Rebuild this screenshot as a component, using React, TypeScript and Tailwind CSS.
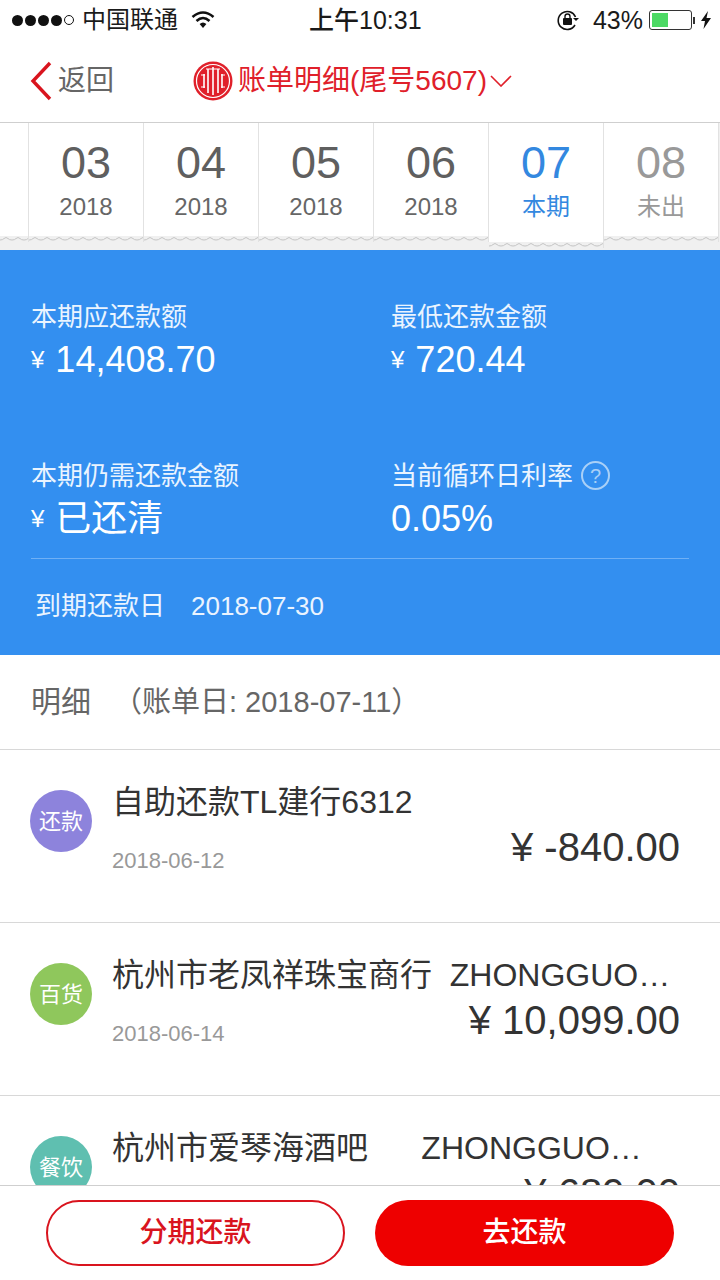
const font = '[font-family:"Liberation_Sans","Noto_Sans_CJK_SC",sans-serif]';

const months = [
  { m: '03', sub: '2018', color: 'text-[#5f5f5f]', subColor: 'text-[#666666]' },
  { m: '04', sub: '2018', color: 'text-[#5f5f5f]', subColor: 'text-[#666666]' },
  { m: '05', sub: '2018', color: 'text-[#5f5f5f]', subColor: 'text-[#666666]' },
  { m: '06', sub: '2018', color: 'text-[#5f5f5f]', subColor: 'text-[#666666]' },
  { m: '07', sub: '本期', color: 'text-[#3388e0]', subColor: 'text-[#3388e0]', active: true },
  { m: '08', sub: '未出', color: 'text-[#999999]', subColor: 'text-[#999999]' },
];

const rows = [
  { tag: '还款', tagBg: 'bg-[#8d83dc]', title: '自助还款TL建行6312', date: '2018-06-12', amount: '-840.00' },
  { tag: '百货', tagBg: 'bg-[#8fc75c]', title: '杭州市老凤祥珠宝商行  ZHONGGUO…', date: '2018-06-14', amount: '10,099.00' },
  { tag: '餐饮', tagBg: 'bg-[#5fbfb0]', title: '杭州市爱琴海酒吧      ZHONGGUO…', date: '2018-06-14', amount: '689.00' },
];

const Wave = ({ id }: { id: string }) => (
  <svg width="100%" height="6" className="block">
    <defs>
      <pattern id={id} width="12" height="6" patternUnits="userSpaceOnUse">
        <path d="M0 4 Q3 4 4 2.5 Q6 0.5 8 2.5 Q9 4 12 4" fill="none" stroke="#c4c4c4" strokeWidth="1" />
      </pattern>
    </defs>
    <rect width="100%" height="6" fill={`url(#${id})`} />
  </svg>
);

const Logo = () => (
  <svg width="40" height="40" viewBox="0 0 40 40">
    <circle cx="20" cy="20" r="19.5" fill="#e0202a" />
    <circle cx="20" cy="20" r="16.5" fill="none" stroke="#fff" strokeWidth="1.2" />
    <path d="M20 6v28M15 8v24M25 8v24M11 13v14M29 13v14" stroke="#fff" strokeWidth="1.6" fill="none" />
    <path d="M8 14h4M8 26h4M28 14h4M28 26h4M13 8h14" stroke="#fff" strokeWidth="1.2" fill="none" />
  </svg>
);

const StatusBar = () => (
  <div className="h-[40px] flex items-center justify-between pl-[12px] pr-[8px] text-[#1a1a1a] shrink-0">
    <div className="flex items-center w-[280px]">
      <div className="flex items-center gap-[2px]">
        <span className="size-[11px] rounded-full bg-[#111111]" />
        <span className="size-[11px] rounded-full bg-[#111111]" />
        <span className="size-[11px] rounded-full bg-[#111111]" />
        <span className="size-[11px] rounded-full bg-[#111111]" />
        <span className="size-[10px] rounded-full border border-[#111111]" />
      </div>
      <span className="ml-[8px] text-[24px] leading-none">中国联通</span>
      <svg width="24" height="18" viewBox="0 0 24 18" className="ml-[13px]">
        <path d="M1.5 6 Q12 -3 22.5 6 M5.5 10 Q12 4 18.5 10" fill="none" stroke="#111" strokeWidth="2.6" />
        <path d="M8.6 13 Q12 10 15.4 13 L12 17 Z" fill="#111" />
      </svg>
    </div>
    <div className="text-[25px] leading-none font-medium absolute left-[309px]">上午10:31</div>
    <div className="flex items-center">
      <svg width="24" height="24" viewBox="0 0 24 24">
        <path d="M19 17 A9 9 0 1 1 19.5 9" fill="none" stroke="#111" strokeWidth="1.6" />
        <path d="M17 10h6l-3 3z" fill="#111" />
        <rect x="7" y="10" width="9" height="7" rx="1" fill="#111" />
        <path d="M9 10V8.5a2.5 2.5 0 0 1 5 0V10" fill="none" stroke="#111" strokeWidth="1.4" />
      </svg>
      <span className="ml-[13px] text-[25px] leading-none">43%</span>
      <div className="ml-[6px] w-[43px] h-[20px] border border-[#333333] rounded-[3px] p-[2px]">
        <div className="w-[44%] h-full bg-[#4cd964]" />
      </div>
      <span className="w-[2px] h-[7px] bg-[#333333] ml-[1px]" />
      <svg width="12" height="18" viewBox="0 0 12 18" className="ml-[5px]">
        <path d="M8 0 L1 10 H5 L3.5 18 L11 7 H6.5 Z" fill="#111" />
      </svg>
    </div>
  </div>
);

const NavBar = () => (
  <div className="h-[82px] flex items-center shrink-0 relative">
    <svg width="24" height="40" viewBox="0 0 24 40" className="ml-[29px]">
      <path d="M21 2 L4 20 L21 38" fill="none" stroke="#d9141e" strokeWidth="3.4" />
    </svg>
    <span className="ml-[5px] text-[28px] text-[#666666] leading-none">返回</span>
    <div className="ml-[79px]"><Logo /></div>
    <span className="ml-[5px] text-[28px] text-[#e0202a] leading-none">账单明细(尾号5607)</span>
    <svg width="22" height="12" viewBox="0 0 22 12" className="ml-[3px]">
      <path d="M1 1 L11 11 L21 1" fill="none" stroke="#e0202a" strokeWidth="1.6" />
    </svg>
  </div>
);

const Tabs = () => (
  <div className="h-[128px] flex items-start bg-[#f0f0f0] border-t border-[#cfcfcf] shrink-0 overflow-hidden">
    <div className="w-[29px] h-[119px] shrink-0 flex flex-col justify-end bg-white border-r border-[#e2e2e2]">
      <div className="bg-[#f0f0f0]"><Wave id="w0" /></div>
    </div>
    {months.map((t, i) => (
      <div
        key={t.m}
        className={`w-[115px] shrink-0 flex flex-col bg-white border-r border-[#e2e2e2] ${t.active ? 'h-[125px]' : 'h-[119px]'}`}
      >
        <div className={`flex-1 flex flex-col items-center ${font}`}>
          <span className={`mt-[14px] text-[45px] leading-[52px] ${t.color}`}>{t.m}</span>
          <span className={`mt-[3px] text-[24px] leading-[30px] ${t.subColor}`}>{t.sub}</span>
        </div>
        <div className="bg-[#f0f0f0]"><Wave id={`w${i + 1}`} /></div>
      </div>
    ))}
  </div>
);

const Stat = ({ label, value, yen, help }: { label: string; value: string; yen?: boolean; help?: boolean }) => (
  <div className="flex flex-col">
    <div className="flex items-center h-[36px] text-[26px] leading-none text-[#eaf4ff]">
      {label}
      {help && (
        <span className="ml-[8px] size-[29px] rounded-full border-2 border-[#a9d0f7] text-[#a9d0f7] text-[20px] flex items-center justify-center">?</span>
      )}
    </div>
    <div className="flex items-center h-[50px] text-[36px] leading-none text-white">
      {yen && <span className="mr-[11px] text-[24px]">¥</span>}
      {value}
    </div>
  </div>
);

const Summary = () => (
  <div className="h-[405px] bg-[#338ff0] px-[31px] shrink-0 flex flex-col">
    <div className="grid grid-cols-[360px_1fr] pt-[49px] gap-y-[58px] h-[308px]">
      <Stat label="本期应还款额" value="14,408.70" yen />
      <Stat label="最低还款金额" value="720.44" yen />
      <Stat label="本期仍需还款金额" value="已还清" yen />
      <Stat label="当前循环日利率" value="0.05%" help />
    </div>
    <div className="h-px bg-[#6fb0f5] mr-[0px]" />
    <div className="flex-1 flex items-center pl-[4px] text-[26px] text-[#eaf4ff] leading-none pb-[2px]">
      <span>到期还款日</span>
      <span className="ml-[26px]">2018-07-30</span>
    </div>
  </div>
);

const Row = ({ tag, tagBg, title, date, amount }: (typeof rows)[number]) => (
  <div className="h-[173px] border-b border-[#d8d8d8] flex pl-[30px] pr-[40px] shrink-0">
    <div className={`size-[62px] mt-[40px] rounded-full ${tagBg} text-white text-[22px] flex items-center justify-center shrink-0`}>{tag}</div>
    <div className="ml-[20px] flex-1 min-w-0 pt-[31px]">
      <div className="text-[32px] leading-[42px] text-[#333333] whitespace-pre">{title}</div>
      <div className="flex justify-between items-start">
        <span className="mt-[25px] text-[22px] leading-[26px] text-[#999999]">{date}</span>
        <span className="-mt-[1px] text-[40px] leading-[50px] text-[#333333]">¥ {amount}</span>
      </div>
    </div>
  </div>
);

export default function App() {
  return (
    <div className={`relative w-[720px] h-[1280px] overflow-hidden bg-white flex flex-col ${font}`}>
      <StatusBar />
      <NavBar />
      <Tabs />
      <div className="flex-1 min-h-0 overflow-hidden">
        <Summary />
        <div className="h-[95px] border-b border-[#d8d8d8] flex items-center pl-[31px] text-[#666666] leading-none">
          <span className="text-[30px]">明细</span>
          <span className="ml-[22px] text-[29px]">（账单日: 2018-07-11）</span>
        </div>
        {rows.map((r) => (
          <Row key={r.tag} {...r} />
        ))}
      </div>
      <div className="h-[95px] shrink-0 bg-white border-t border-[#cfcfcf] flex items-start pl-[46px] pt-[14px] gap-[30px]">
        <button className="w-[299px] h-[66px] rounded-full border-2 border-[#d9141e] text-[#d9141e] text-[28px] font-medium">分期还款</button>
        <button className="w-[299px] h-[66px] rounded-full bg-[#ee0000] text-white text-[28px] font-medium">去还款</button>
      </div>
    </div>
  );
}
